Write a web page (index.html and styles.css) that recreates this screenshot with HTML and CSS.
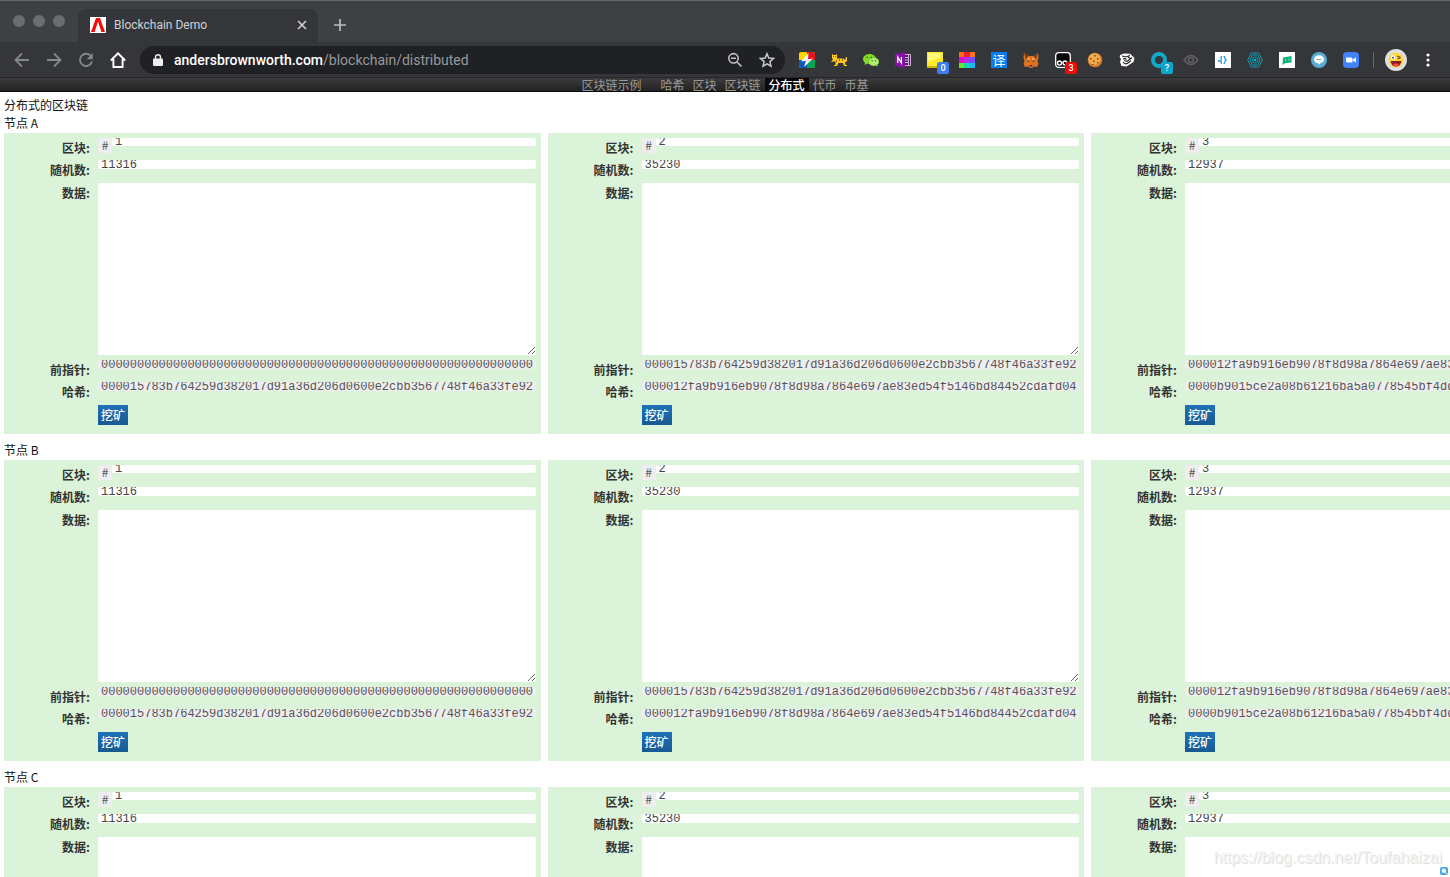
FILE: index.html
```html
<!DOCTYPE html>
<html lang="zh-CN">
<head>
<meta charset="utf-8">
<title>Blockchain Demo</title>
<link rel="stylesheet" href="styles.css">
</head>
<body>
<header class="browser">
  <div class="tabstrip">
    <div class="lights"><i></i><i></i><i></i></div>
    <div class="tab">
      <svg class="favicon" viewBox="0 0 16 16"><path fill="#fff" d="M0 0h16v16H0z"/><path fill="#f50a0a" d="M6 1h4l5 14h-3.600L8 4.500 4.600 15H1z"/></svg>
      <span class="tab-title">Blockchain Demo</span>
      <button class="plain" aria-label="关闭标签页"><svg width="10" height="10" viewBox="0 0 10 10"><path fill="none" stroke="#d5d6d8" stroke-width="1.5" d="m1 1 8 8M9 1 1 9"/></svg></button>
    </div>
    <button class="plain new-tab" aria-label="新标签页"><svg width="12" height="12" viewBox="0 0 12 12"><path fill="none" stroke="#b9bbbe" stroke-width="1.7" d="M6 0v12M0 6h12"/></svg></button>
  </div>
  <div class="toolbar">
    <div class="history">
      <button class="plain" aria-label="后退"><svg class="ico" viewBox="0 0 16 16"><path fill="none" stroke="#85878a" stroke-width="1.8" d="M15 8H2M8 1.5 1.5 8 8 14.5"/></svg></button>
      <button class="plain" aria-label="前进"><svg class="ico" viewBox="0 0 16 16"><path fill="none" stroke="#85878a" stroke-width="1.8" d="M1 8h13M8 1.5 14.500 8 8 14.500"/></svg></button>
      <button class="plain" aria-label="重新加载"><svg class="ico" viewBox="0 0 16 16"><path fill="none" stroke="#85878a" stroke-width="1.8" d="M13 4.200A6.100 6.100 0 1 0 14 9.500"/><path fill="#85878a" d="M14.800 1v6.200H8.600z"/></svg></button>
      <button class="plain" aria-label="主页"><svg class="ico" viewBox="0 0 16 16"><path fill="none" stroke="#fff" stroke-width="1.9" d="M.8 8.500 8 1.300l7.200 7.200M3.400 7v8h9.200V7"/></svg></button>
    </div>
    <div class="address">
      <svg width="10" height="12" viewBox="0 0 10 12"><path fill="#eee" d="M1 4.500h8q1 0 1 1V11q0 1-1 1H1q-1 0-1-1V5.500q0-1 1-1z"/><path fill="none" stroke="#eee" stroke-width="1.400" d="M2.500 5V3a2.500 2.300 0 0 1 5 0v2"/></svg>
      <span class="url"><b>andersbrownworth.com</b>/blockchain/distributed</span>
      <svg class="zoom" viewBox="0 0 16 16"><circle cx="6.500" cy="6.300" r="4.700" fill="none" stroke="#bfc1c4" stroke-width="1.600"/><path stroke="#bfc1c4" stroke-width="1.600" d="m10 10 4.500 4.500M4 6.300h5"/></svg>
      <svg class="star" viewBox="0 0 16 16"><path fill="none" stroke="#c8cacd" stroke-width="1.500" d="m8 1.800 1.800 4.300 4.700.4-3.600 3.100 1.100 4.600L8 11.800l-4 2.400 1.100-4.600-3.600-3.100 4.700-.4z"/></svg>
    </div>
    <div class="extensions">
      <svg class="ico" viewBox="0 0 16 16"><rect width="16" height="16" rx="2" fill="#ffd400"/><path fill="#e8141c" d="M8 0h6q2 0 2 2v6H8z"/><path fill="#0a58b8" d="M0 8h8v8H2q-2 0-2-2z"/><path fill="#00a651" d="M8 8h8v6q0 2-2 2H8z"/><path fill="#fff" d="M9.500 1 2 9.500l5-.7L5 15l9-8.500-5 .7z"/></svg>
      <svg class="ico" viewBox="0 0 16 16"><path fill="#ffc81e" d="m1 2 1.500 1h2L6 2v4.500h6L14.500 8V5.500L16 5v4l-2 1.500.5 2.500H16v1h-3l-1-3H7.500L6 14H3v-1h1.500v-3L3 9l-1.500 1H0l2-2.500L1 6z"/><path fill="#a95a00" d="M2 4h1v1H2zM4 4h1v1H4zM8 7h1v2H8zM11 7h1v2h-1zM5 8h1v2H5z"/></svg>
      <svg class="ico" viewBox="0 0 16 16"><path fill="#82dc20" d="M6.500 2C3 2 0 4.200 0 7c0 1.600.8 2.800 2 3.700L1.500 13 4 11.700l2.500.3C10 12 13 9.700 13 7s-3-5-6.500-5z"/><path fill="#b4ee70" stroke="#4c8f18" stroke-width=".5" d="M10.800 5.500C8 5.500 5.500 7.400 5.500 9.700S8 14 10.800 14l2.200-.4 1.700 1-.3-1.800c1-.8 1.600-1.900 1.600-3.100 0-2.300-2.400-4.200-5.200-4.200z"/><path fill="#315d18" d="M3.500 4.700h1.400v1.400H3.500zM7.600 4.700H9v1.400H7.600zM8.600 8h1v1.200h-1zM12 8h1v1.200h-1z"/></svg>
      <svg class="ico" viewBox="0 0 16 16"><path fill="#8711a4" d="m0 2 10-2v16L0 14z"/><path fill="none" stroke="#d7a9e2" d="M10 2.500h5.500v11H10M10 5.500h3M10 8h3M10 10.500h3M13.500 3v10"/><path fill="none" stroke="#fff" stroke-width="1.300" d="M2.800 11V5l3.600 6V5"/></svg>
      <span class="badged"><svg class="ico" viewBox="0 0 16 16"><path fill="#ffe924" d="M0 0h16v16H0z"/><path fill="#fff778" d="M1 1h13v4L1 10z"/><path fill="#d4b800" d="M0 14h16v2H0z"/></svg><em class="blue">0</em></span>
      <svg class="ico" viewBox="0 0 16 16"><path fill="#ff6b12" d="M0 0h5v5H0z"/><path fill="#f11e39" d="M5 0h6v5H5z"/><path fill="#ff7a14" d="M11 0h5v5h-5z"/><path fill="#e60ac8" d="M0 5h5v6H0z"/><path fill="#b62bea" d="M5 5h6v6H5z"/><path fill="#704fff" d="M11 5h5v6h-5z"/><path fill="#66e829" d="M0 11h5v5H0z"/><path fill="#16d9ad" d="M5 11h6v5H5z"/><path fill="#1ab8f5" d="M11 11h5v5h-5z"/></svg>
      <span class="translate">译</span>
      <svg class="ico" viewBox="0 0 16 16"><path fill="#df711d" d="m1 1 5 3h4l5-3 .5 5-1 3 1 3-1.500 3-3-.5L9 16H7l-2-1.500L2 15 .5 12l1-3-1-3z"/><path fill="#793d18" d="m1 1 5 3-3 3zM15 1l-5 3 3 3z"/><path fill="#283346" d="m4 8 3 1-1 1zM12 8 9 9l1 1zM6.500 13h3l-.5 1.500H7z"/><path fill="#f6a85c" d="m6 4 1 5-3-2zM10 4 9 9l3-2z"/></svg>
      <span class="badged"><svg class="ico" viewBox="0 0 16 16"><rect x=".7" y=".7" width="14.600" height="14.600" rx="3" fill="#050505" stroke="#fff" stroke-width="1.300"/><circle cx="4.500" cy="11" r="2" fill="none" stroke="#fff" stroke-width="1.400"/><circle cx="10" cy="11" r="2" fill="none" stroke="#fff" stroke-width="1.400"/></svg><em class="red">3</em></span>
      <svg class="ico" viewBox="0 0 16 16"><circle cx="8" cy="8" r="7.300" fill="#d77a28"/><circle cx="7.500" cy="7.300" r="6" fill="#f2ac50"/><path fill="#80400f" d="M3 6h1.500v1.500H3zM7 3h1.500v1.500H7zM10 6h1.500v1.500H10zM6 8.500h1.500V10H6zM10 10h1.500v1.500H10zM5 12h1.500v1H5z"/></svg>
      <svg class="ico" viewBox="0 0 16 16"><path fill="#fff" d="m1 3 4-1.500 6 .3L15.500 6l-1 4-7 4.500-5-.5L1 10l1-3-1.300-2z"/><path fill="none" stroke="#222" stroke-width="1.100" d="m3 4 4 1 4-1.500M4 7q2-1 3.500.5M5 8.500l3 1 5-4M4 10q2 3 5 1l3-2.500M9 5l3 2"/></svg>
      <span class="badged"><svg class="ico" viewBox="0 0 16 16"><circle cx="8" cy="8" r="6" fill="none" stroke="#10a9cb" stroke-width="4"/></svg><em class="cyan">?</em></span>
      <svg class="ico" viewBox="0 0 16 16"><path fill="none" stroke="#606166" stroke-width="1.300" d="M1 8q7-9 14 0-7 9-14 0z"/><circle cx="8" cy="8" r="2.500" fill="none" stroke="#606166" stroke-width="1.500"/></svg>
      <svg class="ico" viewBox="0 0 16 16"><path fill="#fff" d="M0 0h16v16H0z"/><path fill="none" stroke="#1595d3" stroke-width="1.300" d="M3 9h2M7 4.500q-1 0-1 1.500v4q0 1.500 1 1.500M8.500 4.500q1.500 0 1.500 1.500t1 2q-1 .5-1 2t-1.500 1.500"/></svg>
      <svg class="ico" viewBox="0 0 16 16"><g fill="none" stroke="#0b9db4"><path d="M4.300 1h7.400l3.600 7-3.600 7H4.300L.7 8z"/><path d="M5.500 3h5L13 8l-2.500 5h-5L3 8z"/><path d="M6.500 5.200h3L11 8l-1.500 2.800h-3L5 8z"/></g><circle cx="8" cy="8" r="1.300" fill="#0bbace"/></svg>
      <svg class="ico" viewBox="0 0 16 16"><path fill="#fff" d="M0 0h16v16H0z"/><path fill="#0eb27d" d="M4 5.500 12.500 4v6.500L6 11.300 3.500 13z"/><path fill="#d8fff2" d="M6 7.500h1v1H6zM9.500 7h1v1h-1z"/></svg>
      <svg class="ico" viewBox="0 0 16 16"><circle cx="8" cy="8" r="8" fill="#58acd4"/><path fill="#fff" d="M8 3.300c-3 0-5 1.800-5 4s1.700 3.500 4 3.900L8 13l1.200-1.800c2.300-.4 3.800-1.900 3.800-3.900 0-2.200-2-4-5-4z"/><path stroke="#76a8bd" d="M5.500 7.500h5"/></svg>
      <svg class="ico" viewBox="0 0 16 16"><rect width="16" height="16" rx="4" fill="#4382ff"/><path fill="#fff" d="M3 5.500h5q1.500 0 1.500 1.500v3.500H5Q3 10.500 3 9zM10 7.300 13 5.500v5L10 8.700z"/></svg>
    </div>
    <span class="separator"></span>
    <svg class="avatar" viewBox="0 0 22 22"><circle cx="11" cy="11" r="11" fill="#dedfe2"/><circle cx="11" cy="11" r="7.500" fill="#ffd640"/><circle cx="8" cy="8.500" r="2.200" fill="#fff"/><path fill="none" stroke="#432" d="m12 7 3.500 1.500L12.500 10"/><circle cx="8" cy="8.700" r=".9" fill="#432"/><path fill="#8b1b20" d="M5.500 12h11q-1 5.500-5.500 5.500T5.500 12z"/><path fill="#f24b50" d="M8 15q3-1 6 0-1 2.500-3 2.500T8 15z"/></svg>
    <button class="plain menu" aria-label="菜单"><svg width="4" height="14" viewBox="0 0 4 14"><g fill="#fff"><circle cx="2" cy="2" r="1.600"/><circle cx="2" cy="7" r="1.600"/><circle cx="2" cy="12" r="1.600"/></g></svg></button>
  </div>
</header>
<nav class="navbar">
  <a class="brand" href="#">区块链示例</a><a href="#">哈希</a><a href="#">区块</a><a href="#">区块链</a><a class="active" href="#">分布式</a><a href="#">代币</a><a href="#">币基</a>
</nav>
<main class="page" id="page">
  <h1>分布式的区块链</h1>
</main>
<div class="watermark">https://blog.csdn.net/Toufahaizai</div>
<svg class="corner" viewBox="0 0 8 8"><rect width="8" height="8" rx="2" fill="#45a5e4"/><circle cx="3.800" cy="3.800" r="2.300" fill="#eef8ff"/><path stroke="#d9f0ff" d="m5 5 2 2"/></svg>
<script src="chain.js"></script>
</body>
</html>
```
FILE: styles.css
```css
* { box-sizing: border-box; }
body {
  margin: 0;
  height: 100vh;
  display: flex;
  flex-direction: column;
  overflow: hidden;
  position: relative;
  background: #fff;
  color: #333;
  font: 12px/18px "Noto Sans CJK SC", sans-serif;
}
svg { display: block; flex: none; }
.plain { padding: 0; border: 0; background: none; }
.ico { width: 16px; height: 16px; }

/* Browser frame */
.browser { flex: none; background: #35363a; font-family: Roboto, sans-serif; }
.tabstrip {
  display: flex;
  height: 42px;
  padding: 8px 0 0 13px;
  border-top: 1px solid #62686b;
  background: #3d4144;
}
.lights { display: flex; gap: 8px; padding-top: 6px; width: 65px; }
.lights i { width: 12px; height: 12px; border-radius: 50%; background: #6b6d70; }
.tab {
  display: flex;
  align-items: center;
  width: 240px;
  padding: 0 11px 2px 12px;
  border-radius: 8px 8px 0 0;
  background: #35363a;
}
.favicon { width: 16px; height: 16px; margin-right: 8px; }
.tab-title { flex: 1; font-size: 12px; color: #d0d2d5; }
.new-tab { padding: 0 0 2px 16px; }
.toolbar {
  display: flex;
  align-items: center;
  height: 36px;
  padding: 0 20px 0 14px;
  border-bottom: 1px solid #252527;
}
.history { display: flex; gap: 16px; margin-right: 14px; }
.address {
  flex: 1;
  display: flex;
  align-items: center;
  height: 28px;
  padding: 0 10px 0 13px;
  border-radius: 14px;
  background: #202124;
  color: #97999c;
  font-size: 14px;
}
.url { flex: 1; margin-left: 11px; }
.url b { font-weight: 500; color: #fff; }
.zoom, .star { width: 16px; height: 16px; }
.star { margin-left: 16px; }
.extensions { display: flex; gap: 16px; margin-left: 14px; }
.badged { position: relative; }
.badged em {
  position: absolute;
  left: 10px;
  top: 10px;
  width: 12px;
  height: 12px;
  border-radius: 2px;
  color: #fff;
  font: 500 9px/12px Roboto, sans-serif;
  text-align: center;
}
.blue { background: #3d7df2; }
.red { background: #f00a0a; }
.cyan { background: #0ba6cb; }
.translate {
  width: 16px;
  height: 16px;
  background: #087cf5;
  color: #fff;
  font: 13px/16px "Noto Sans CJK SC", sans-serif;
  text-align: center;
}
.separator { width: 1px; height: 16px; margin: 0 11px 0 14px; background: #66676b; }
.avatar { width: 22px; height: 22px; }
.menu { margin-left: 19px; }

/* Site navigation */
.navbar {
  flex: none;
  display: flex;
  justify-content: center;
  height: 14px;
  border-bottom: 1px solid #080808;
  background: linear-gradient(#3c3c3c, #222);
  line-height: 14px;
}
.navbar a { height: 13px; padding: 0 4px; color: #999; text-decoration: none; }
.navbar .brand { margin-right: 11px; }
.navbar .active { background: #090909; color: #fff; font-weight: 500; }

/* Chains */
.page { flex: 1; min-height: 0; padding: 4px 0 0 4px; overflow: hidden; }
h1, h2 { margin: 0; font: inherit; color: #111; }
.node { margin-bottom: 7px; }
.chain { display: flex; gap: 7px; margin-top: 1px; }
.block {
  flex: none;
  width: 37vw;
  padding: 5px 5px 9px 0;
  background: #dbf3d8;
}
.row { display: grid; grid-template-columns: 86px 1fr; gap: 8px; height: 23px; }
.row.short { height: 22px; }
.row.data { height: 177px; }
.row.action { height: 20px; }
label { text-align: right; font-weight: 700; line-height: 20px; }
.row input, textarea {
  display: block;
  width: 100%;
  min-width: 0;
  margin: 0;
  border: 0;
  border-radius: 2px;
  background: #fff;
  color: #444;
  font: 12px/9px "Liberation Mono", monospace;
}
.row input { height: 9px; padding: 0 2px 0 3px; }
.row .group input { height: 8px; }
.row input:disabled { background: #eee; color: #555; }
textarea { height: 172px; padding: 3px; resize: both; }
.group { display: flex; align-items: flex-start; }
.hash-sign {
  flex: none;
  width: 14px;
  height: 15px;
  background: #eee;
  color: #555;
  line-height: 14px;
  text-align: center;
}
.mine {
  grid-column: 2;
  justify-self: start;
  padding: 0 3px;
  border: 0;
  background: linear-gradient(#1e72b8, #185a92);
  color: #fff;
  font: 500 12px/20px "Noto Sans CJK SC", sans-serif;
}

.watermark {
  position: absolute;
  right: 8px;
  bottom: 9px;
  color: #f4f4f4;
  text-shadow: 1px 1px 1px #d8d8d8;
  font: 16px/20px "Liberation Sans", sans-serif;
}
.corner { position: absolute; right: 2px; bottom: 2px; width: 8px; height: 8px; }
```
FILE: chain.js
```js
const hashes = [
  "000000000000000000000000000000000000000000000000000000000000",
  "000015783b764259d382017d91a36d206d0600e2cbb3567748f46a33fe92",
  "000012fa9b916eb9078f8d98a7864e697ae83ed54f5146bd84452cdafd04",
  "0000b9015ce2a08b61216ba5a0778545bf4ddd7ceb7bbd85dd8062b29a91"
];
const nonces = ["11316", "35230", "12937"];

function block(node, i) {
  const id = node + (i + 1);
  return `<form class="block">
    <div class="row short"><label for="n${id}">区块:</label><div class="group"><span class="hash-sign">#</span><input id="n${id}" value="${i + 1}"></div></div>
    <div class="row"><label for="r${id}">随机数:</label><input id="r${id}" value="${nonces[i]}"></div>
    <div class="row data"><label for="d${id}">数据:</label><textarea id="d${id}"></textarea></div>
    <div class="row short"><label for="p${id}">前指针:</label><input id="p${id}" value="${hashes[i]}" disabled></div>
    <div class="row"><label for="h${id}">哈希:</label><input id="h${id}" value="${hashes[i + 1]}" disabled></div>
    <div class="row action"><button type="button" class="mine">挖矿</button></div>
  </form>`;
}

document.getElementById("page").insertAdjacentHTML("beforeend", ["A", "B", "C"].map(node =>
  `<section class="node"><h2>节点 ${node}</h2><div class="chain">${nonces.map((_, i) => block(node, i)).join("")}</div></section>`
).join(""));
```
